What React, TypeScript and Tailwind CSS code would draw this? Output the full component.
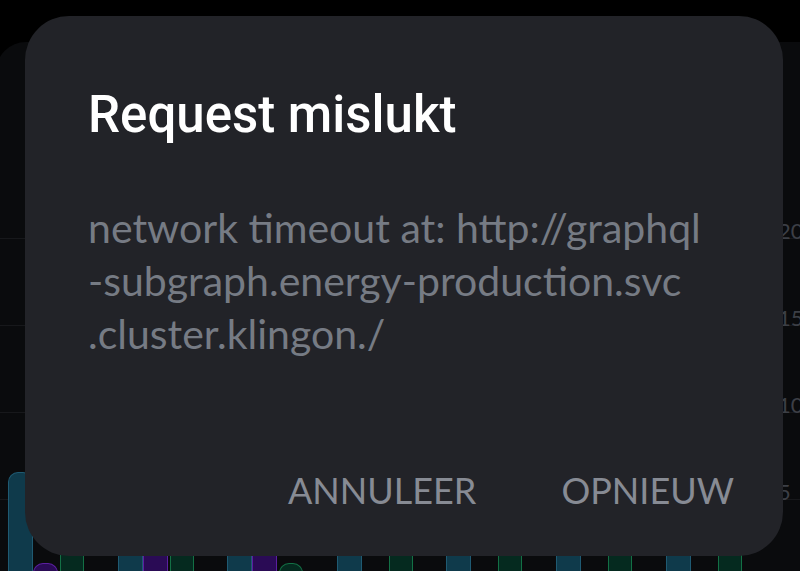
import React from "react";

type Group = { blue: number; purple: number; green: number };

const groups: Group[] = [
  { blue: 115, purple: 24, green: 60 },
  { blue: 60, purple: 60, green: 60 },
  { blue: 60, purple: 60, green: 24 },
  { blue: 60, purple: 0, green: 60 },
  { blue: 60, purple: 0, green: 60 },
  { blue: 60, purple: 0, green: 60 },
  { blue: 60, purple: 0, green: 60 },
];

export default function App() {
  return (
    <div className="relative w-[800px] h-[571px] overflow-hidden bg-black" style={{ fontFamily: "Lato, 'Noto Sans', sans-serif" }}>
      {/* background page */}
      <div className="pt-[42px] ml-[-4px] w-[860px]">
        <div className="relative h-[560px] rounded-t-[30px] bg-[#0a0b0d]">
          {/* grid lines */}
          <div className="flex flex-col pt-[196px]">
            {["20", "15", "10", "5"].map((l) => (
              <div key={l} className="flex h-[87px] flex-col">
                <div className="flex h-[1px] w-full bg-[#17181b]" />
              </div>
            ))}
          </div>
          <div className="absolute left-[782px] top-[145px] flex flex-col text-[22px] leading-[87px] text-[#3c3f46]">
            <span>20</span>
            <span>15</span>
            <span>10</span>
            <span>5</span>
          </div>
          {/* bars */}
          <div className="absolute left-[12px] top-[0px] h-[545px] flex items-end">
            {groups.map((g, i) => (
              <div key={i} className="flex items-end w-[109.6px] shrink-0">
                <div
                  className="w-[25px] rounded-t-[10px] border border-b-0 border-[#1f5a72] bg-[#0f3a4b]"
                  style={{ height: g.blue }}
                />
                <div
                  className="w-[25px] rounded-t-[10px] border border-b-0 border-[#5b1fa0] bg-[#2a0b55]"
                  style={{ height: g.purple, opacity: g.purple ? 1 : 0 }}
                />
                <div
                  className="ml-[2px] w-[24px] rounded-t-[10px] border border-b-0 border-[#137045] bg-[#052a1f]"
                  style={{ height: g.green }}
                />
              </div>
            ))}
          </div>
        </div>
      </div>

      {/* dialog */}
      <div className="absolute left-[25px] top-[16px] flex h-[540px] w-[758px] flex-col rounded-[44px] bg-[#222328] pl-[63px] pt-[69px]">
        <h2
          className="text-[51px] leading-[60px] font-medium text-white"
          style={{ fontFamily: "Roboto, 'Noto Sans', sans-serif" }}
        >
          Request mislukt
        </h2>
        <p className="mt-[56px] text-[41px] leading-[53px] text-[#767b84]">
          network timeout at: http://graphql
          <br />
          -subgraph.energy-production.svc
          <br />
          .cluster.klingon./
        </p>
        <div className="mt-auto flex justify-end gap-[85px] pb-[43px] pr-[49px] text-[36px] leading-[46px] text-[#878b94]">
          <button className="uppercase">ANNULEER</button>
          <button className="uppercase">OPNIEUW</button>
        </div>
      </div>
    </div>
  );
}
